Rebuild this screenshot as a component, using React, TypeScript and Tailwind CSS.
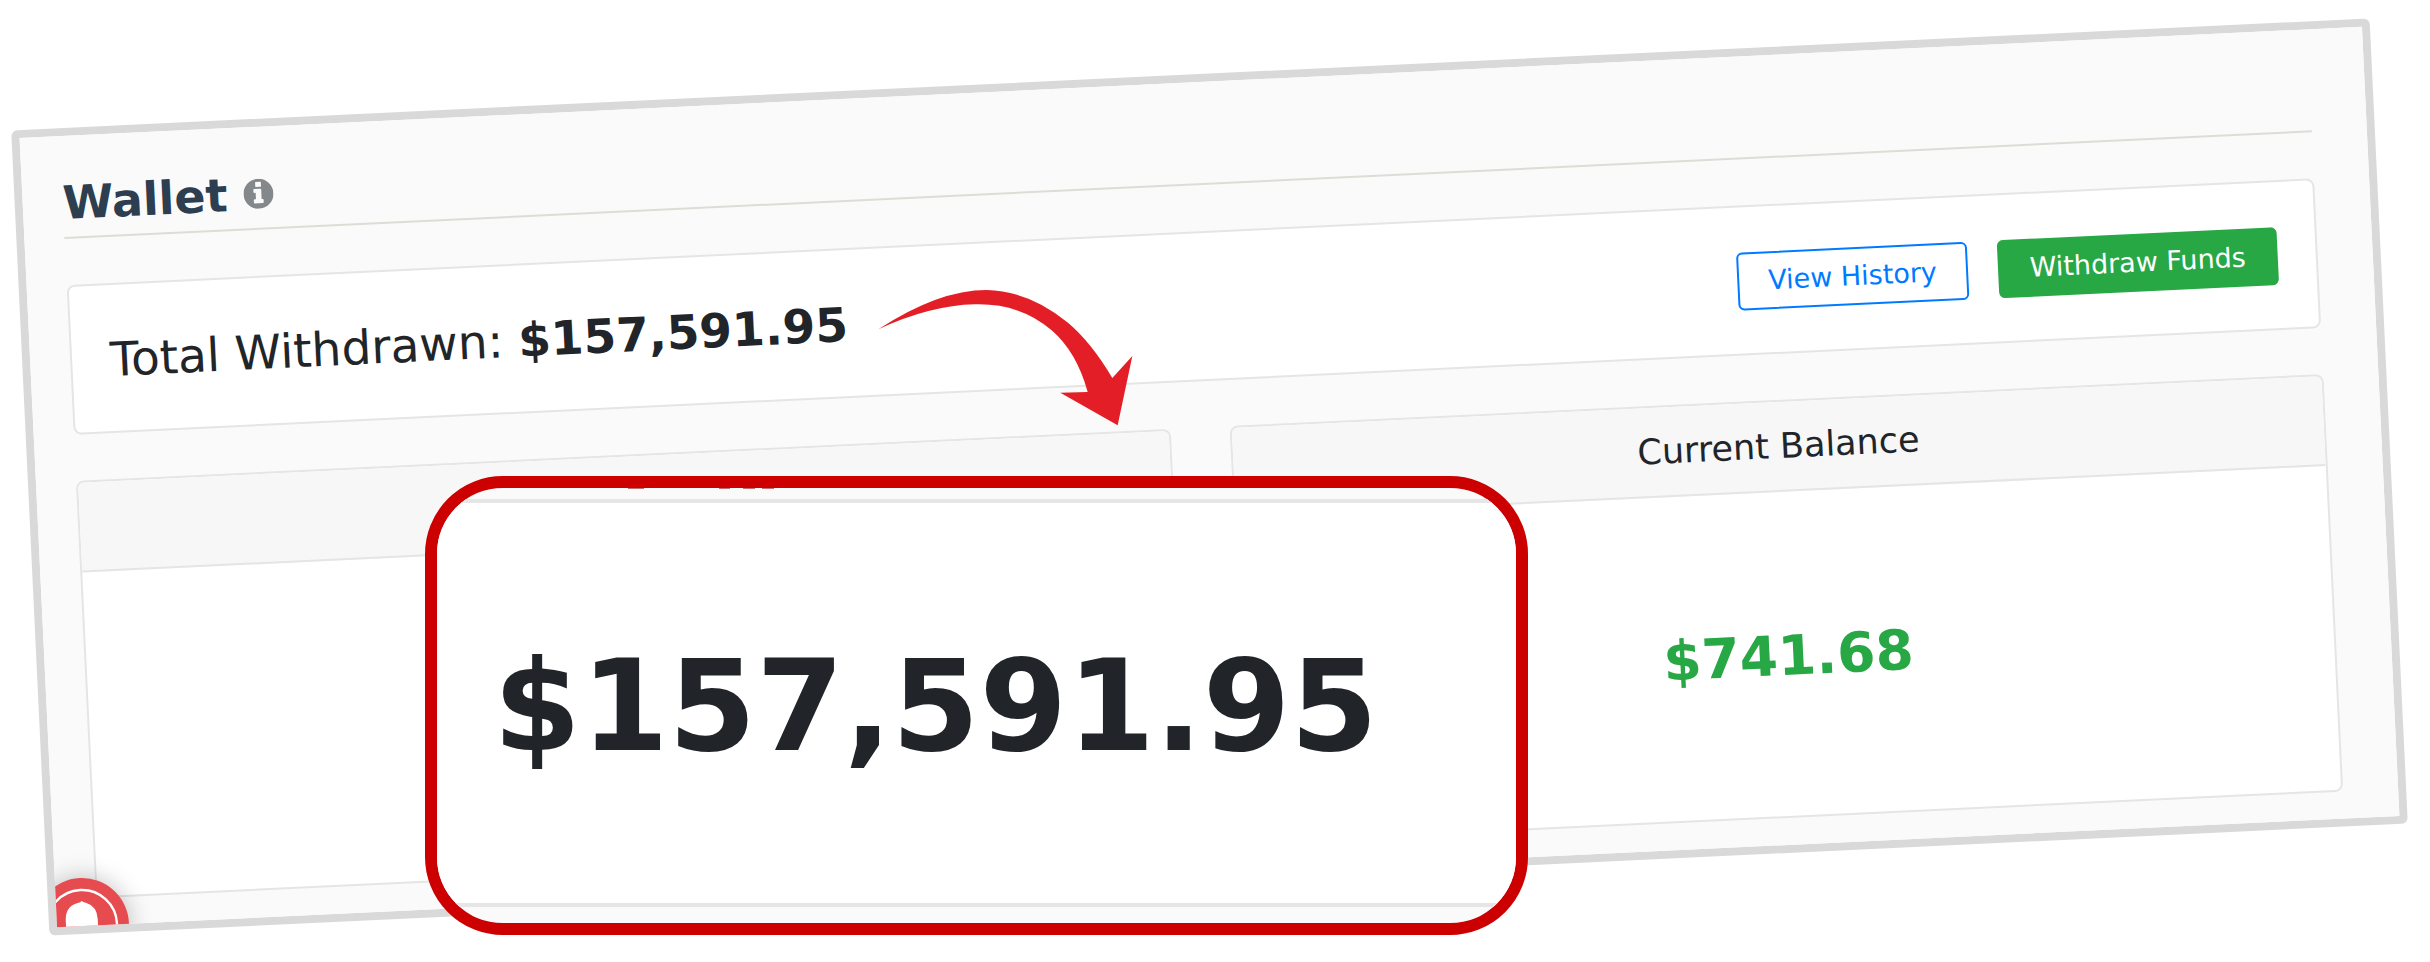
import React from "react";

function InfoIcon() {
  return (
    <svg viewBox="8 8 496 496" className="size-[30px] fill-[#85888b]" aria-hidden="true">
      <path d="M256 8C119.043 8 8 119.083 8 256c0 136.997 111.043 248 248 248s248-111.003 248-248C504 119.083 392.957 8 256 8zm-36 50h72q12 0 12 12v58q0 12-12 12h-72q-12 0-12-12V70q0-12 12-12zM336 394q0 18-16 18H190q-16 0-16-18v-34q0-16 16-16h20V238h-20q-16 0-16-16v-32q0-16 16-16h98q16 0 16 16v154h16q16 0 16 16z" />
    </svg>
  );
}

function NotificationBubble() {
  return (
    <button
      type="button"
      aria-label="Notifications"
      className="absolute -bottom-[46px] -left-[22px] size-[94px] rounded-full bg-[#e64c4f] shadow-[0_0_24px_rgba(0,0,0,0.25)]"
    >
      <svg viewBox="0 0 94 94" className="size-full" aria-hidden="true">
        <circle cx="47" cy="47" r="35" fill="none" stroke="#fff" strokeWidth="2.4" />
        <path d="M31 60V42q0-14 12-17q3 0 5-2q2 2 4 2q11 4 11 17v18z" fill="#fff" />
      </svg>
    </button>
  );
}

function BalanceCard({ title, amount }: { title?: string; amount?: string }) {
  return (
    <section className="flex h-[418px] flex-1 flex-col overflow-hidden rounded-lg border-2 border-[#e5e5e5] bg-white">
      <h2 className="flex h-[90px] items-center justify-center border-b-2 border-[#e5e5e5] bg-[#f7f7f7] text-[35px]">
        {title}
      </h2>
      <p className="flex flex-1 items-center justify-center pt-1 text-[55px] font-bold text-[#28a745]">{amount}</p>
    </section>
  );
}

function Arrow() {
  return (
    <svg viewBox="0 0 780 420" className="absolute left-[36%] top-[287px] w-[260px]" aria-hidden="true">
      <path
        d="M10 127Q190 9 335 9Q465 12 580 108Q650 168 712 273L772 207L728 415L556 317L638 315Q605 195 530 130Q435 48 300 52Q165 55 10 127Z"
        fill="#e41e26"
      />
    </svg>
  );
}

export default function App() {
  return (
    <main className="relative min-h-screen overflow-hidden bg-white pt-[74px] pb-[84px] pl-[29px] pr-10 font-['DejaVu_Sans',sans-serif] text-[#212529]">
      <div className="-rotate-[2.72deg] rounded-md border-8 border-[#d9d9d9]">
        <div className="relative overflow-hidden bg-[#fafafa] pt-8 pr-[55px] pb-[27px] pl-10">
          <header className="flex h-[71px] items-center gap-4 border-b-2 border-[#dddcd6]">
            <h1 className="text-[46px] leading-none font-bold text-[#2c3e50]">Wallet</h1>
            <InfoIcon />
          </header>

          <section className="mt-[46px] flex h-[150px] items-center justify-between rounded-lg border-2 border-[#e5e5e5] bg-white px-[38px] pt-0.5">
            <p className="text-[47px] leading-none">
              Total Withdrawn: <strong>$157,591.95</strong>
            </p>
            <div className="flex gap-[30px]">
              <button type="button" className="h-[58px] rounded-md border-2 border-[#007bff] px-[29px] text-[27px] text-[#007bff]">
                View History
              </button>
              <button type="button" className="h-[58px] rounded-md bg-[#28a745] px-8 text-[27px] text-white">
                Withdraw Funds
              </button>
            </div>
          </section>

          <div className="mt-[46px] flex gap-[59px]">
            <BalanceCard />
            <BalanceCard title="Current Balance" amount="$741.68" />
          </div>
          <NotificationBubble />
        </div>
      </div>

      <Arrow />

      <aside className="absolute left-[17.500%] top-[476px] flex h-[459px] w-[45.400%] flex-col overflow-hidden rounded-[78px] border-12 border-[#cc0000] bg-[#fafafa]">
        <svg viewBox="0 0 340 1" className="absolute top-0 left-0 w-[340px] fill-[#c07070]" aria-hidden="true">
          <path d="M191 0h16v1h-16zM282 0h11v1h-11zM306 0h12v1h-12zM325 0h12v1h-12z" />
        </svg>
        <div className="mt-[11px] mb-4 flex flex-1 items-center border-y-4 border-[#e6e6e6] bg-white pt-2 pl-14 text-[126px] leading-none font-bold">
          $157,591.95
        </div>
      </aside>
    </main>
  );
}
